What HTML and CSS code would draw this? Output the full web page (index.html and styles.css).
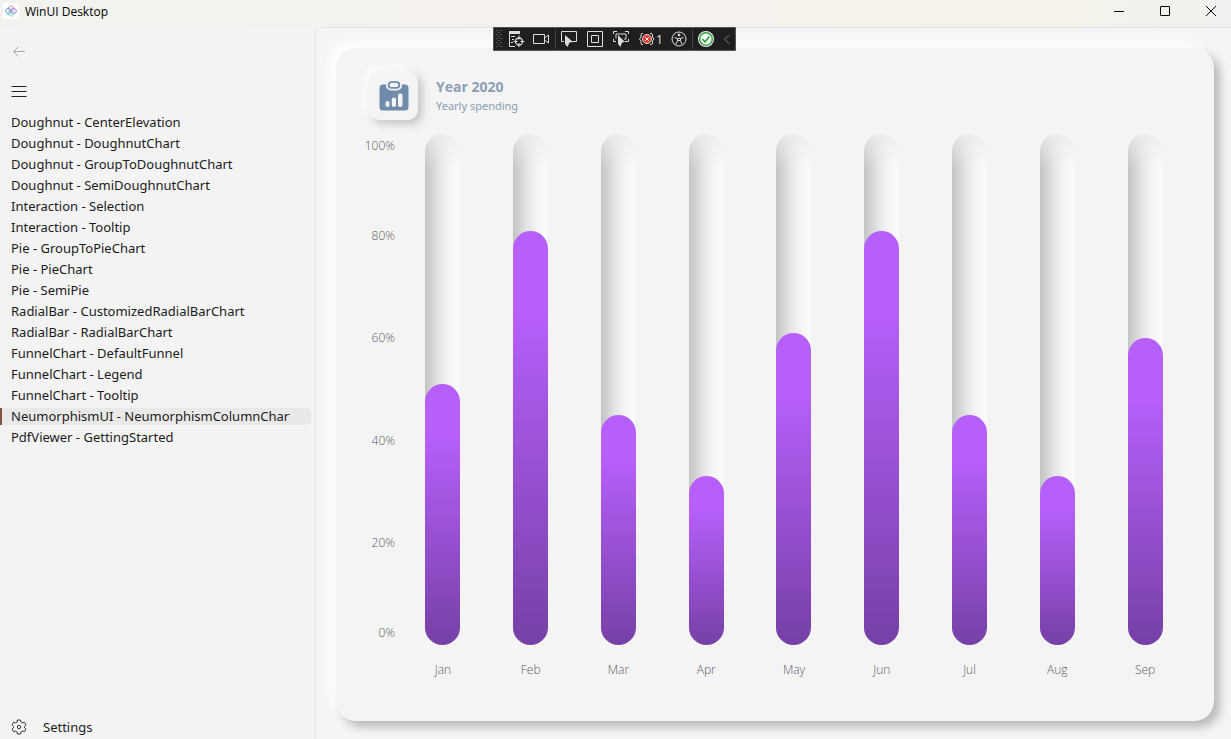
FILE: index.html
```
<!DOCTYPE html>
<html lang="en">
<head>
<meta charset="utf-8">
<title>WinUI Desktop</title>
<link rel="stylesheet" href="styles.css">
</head>
<body>
<div class="window">
  <header class="titlebar">
    <svg class="app-logo" width="16" height="16" viewBox="0 0 16 16" fill="none" stroke-width="1.100">
      <rect width="16" height="16" fill="#fff"/>
      <rect x="5.500" y="3.300" width="5" height="5" rx="1.600" transform="rotate(45 8 5.800)" stroke="#f39aa6"/>
      <rect x="8" y="5.500" width="5" height="5" rx="1.600" transform="rotate(45 10.500 8)" stroke="#a58cf2"/>
      <rect x="5.500" y="7.700" width="5" height="5" rx="1.600" transform="rotate(45 8 10.200)" stroke="#8be0cf"/>
      <rect x="3" y="5.500" width="5" height="5" rx="1.600" transform="rotate(45 5.500 8)" stroke="#6fb4f2"/>
      <path d="m6.800 6.800 2.400 2.400" stroke="#e070c8"/>
    </svg>
    <h1 class="app-title">WinUI Desktop</h1>
    <div class="caption-buttons">
      <button class="caption" aria-label="Minimize"><svg width="12" height="12" viewBox="0 0 12 12"><path d="M1 6.500h10" stroke="#000" fill="none"/></svg></button>
      <button class="caption" aria-label="Maximize"><svg width="12" height="12" viewBox="0 0 12 12"><rect x="1.500" y="1.500" width="9" height="9" rx=".5" stroke="#000" fill="none"/></svg></button>
      <button class="caption" aria-label="Close"><svg width="12" height="12" viewBox="0 0 12 12"><path d="m1 1 10 10M11 1 1 11" stroke="#000" fill="none"/></svg></button>
    </div>
  </header>

  <div class="body">
    <aside class="sidebar">
      <button class="icon-button back" aria-label="Back" disabled><svg width="16" height="16" viewBox="0 0 16 16" fill="none" stroke="#aaa"><path d="M14 8.500H2.500M7.500 3.500l-5 5 5 5"/></svg></button>
      <button class="icon-button menu" aria-label="Menu"><svg width="16" height="16" viewBox="0 0 16 16" fill="none" stroke="#222"><path d="M.5 3.500h15M.5 8.500h15M.5 13.500h15"/></svg></button>
      <nav class="nav">
        <a class="nav-item" href="#"><span>Doughnut - CenterElevation</span></a>
        <a class="nav-item" href="#"><span>Doughnut - DoughnutChart</span></a>
        <a class="nav-item" href="#"><span>Doughnut - GroupToDoughnutChart</span></a>
        <a class="nav-item" href="#"><span>Doughnut - SemiDoughnutChart</span></a>
        <a class="nav-item" href="#"><span>Interaction - Selection</span></a>
        <a class="nav-item" href="#"><span>Interaction - Tooltip</span></a>
        <a class="nav-item" href="#"><span>Pie - GroupToPieChart</span></a>
        <a class="nav-item" href="#"><span>Pie - PieChart</span></a>
        <a class="nav-item" href="#"><span>Pie - SemiPie</span></a>
        <a class="nav-item" href="#"><span>RadialBar - CustomizedRadialBarChart</span></a>
        <a class="nav-item" href="#"><span>RadialBar - RadialBarChart</span></a>
        <a class="nav-item" href="#"><span>FunnelChart - DefaultFunnel</span></a>
        <a class="nav-item" href="#"><span>FunnelChart - Legend</span></a>
        <a class="nav-item" href="#"><span>FunnelChart - Tooltip</span></a>
        <a class="nav-item selected" href="#" aria-current="page"><span>NeumorphismUI - NeumorphismColumnChart</span></a>
        <a class="nav-item" href="#"><span>PdfViewer - GettingStarted</span></a>
      </nav>
      <a class="settings" href="#">
        <svg width="16" height="16" viewBox="0 0 16 16" fill="none" stroke="#333" stroke-linejoin="round"><path d="M6.500 1h3l.5 2 1.500.9 2-.6 1.500 2.600L13.500 7.300v1.400L15 10.100l-1.500 2.600-2-.6-1.500.9-.5 2h-3l-.5-2-1.500-.9-2 .6L1 10.100l1.500-1.400V7.300L1 5.900l1.500-2.600 2 .6L6 3z"/><circle cx="8" cy="8" r="1.700"/></svg>
        <span>Settings</span>
      </a>
    </aside>

    <main class="content">
      <section class="card">
        <header class="card-header">
          <div class="badge">
            <svg width="30" height="30" viewBox="0 0 30 30">
              <path d="M4 3.500h22A3.500 3.500 0 0 1 29.500 7v19a3.500 3.500 0 0 1-3.500 3.500H4A3.500 3.500 0 0 1 .5 26V7A3.500 3.500 0 0 1 4 3.500z" fill="#6f8cab"/>
              <rect x="7" y="-1.500" width="16" height="11" rx="5" fill="#f4f4f4"/>
              <rect x="9.700" y="1.200" width="10.600" height="5.600" rx="2.500" fill="none" stroke="#6f8cab" stroke-width="1.800"/>
              <rect x="6.500" y="20" width="4" height="6" rx="2" fill="#f4f4f4"/>
              <rect x="12.800" y="16.500" width="4.200" height="9.500" rx="2" fill="#f4f4f4"/>
              <rect x="19" y="12.500" width="4.500" height="13.500" rx="2" fill="#f4f4f4"/>
            </svg>
          </div>
          <div>
            <h2 class="card-title">Year 2020</h2>
            <p class="card-subtitle">Yearly spending</p>
          </div>
        </header>
        <div class="chart">
          <div class="y-axis"><span>100%</span><span>80%</span><span>60%</span><span>40%</span><span>20%</span><span>0%</span></div>
          <div class="columns">
            <div class="track"><div class="bar" style="height:51%"></div></div>
            <div class="track"><div class="bar" style="height:81%"></div></div>
            <div class="track"><div class="bar" style="height:45%"></div></div>
            <div class="track"><div class="bar" style="height:33%"></div></div>
            <div class="track"><div class="bar" style="height:61%"></div></div>
            <div class="track"><div class="bar" style="height:81%"></div></div>
            <div class="track"><div class="bar" style="height:45%"></div></div>
            <div class="track"><div class="bar" style="height:33%"></div></div>
            <div class="track"><div class="bar" style="height:60%"></div></div>
          </div>
          <div class="x-axis"><span>Jan</span><span>Feb</span><span>Mar</span><span>Apr</span><span>May</span><span>Jun</span><span>Jul</span><span>Aug</span><span>Sep</span></div>
        </div>
      </section>
    </main>
  </div>

  <div class="debug-bar" role="toolbar" aria-label="Debug tools">
    <svg class="grip" width="8" height="20" viewBox="0 0 8 20" stroke="#555" stroke-dasharray="2 2"><path d="M1 1.500h6M1 5.500h6M1 9.500h6M1 13.500h6M1 17.500h6"/><path d="M3 3.500h4M3 7.500h4M3 11.500h4M3 15.500h4"/></svg>
    <button class="tool" aria-label="Live visual tree"><svg width="18" height="18" viewBox="0 0 18 18" fill="none" stroke="#ddd"><path d="M2 1h11v3H2z" fill="#ddd" stroke="none"/><path d="M2.500 2v14.500H8M4 6.500h4M5 9.500h2M4 12.500h2M12 5.500v4M12 13v4M6.500 11.500h4M13.500 11.500h4"/><circle cx="12" cy="11.500" r="3.500" stroke-width="1.300"/></svg></button>
    <button class="tool" aria-label="Record"><svg width="18" height="18" viewBox="0 0 18 18" fill="none" stroke="#ddd"><path d="M.5 4.500h11v9H.5zM11.500 8l4-3v8l-4-3"/></svg></button>
    <i class="divider"></i>
    <button class="tool" aria-label="Select element"><svg width="18" height="18" viewBox="0 0 18 18" fill="none" stroke="#ddd"><path d="M4 11.500H1.500v-10h15v10H12"/><path d="m5 5 8 7-3.500.5L7.500 17 5 14z" fill="#ddd" stroke="none"/></svg></button>
    <button class="tool" aria-label="Show layout adorners"><svg width="18" height="18" viewBox="0 0 18 18" fill="none" stroke="#ddd"><path d="M1.500 1.500h15v15h-15zM5.500 5.500h7v7h-7z"/></svg></button>
    <button class="tool" aria-label="Track focused element"><svg width="18" height="18" viewBox="0 0 18 18" fill="none" stroke="#ddd"><path d="M1.500 4V1.500H5M13 1.500h3.500V4M1.500 9v2.500H4M13 11.500h3.500V9M4 8.500v-4.500h10v5h-2"/><path d="m6 5 7 7-3 .5L8.500 17 6 14z" fill="#ddd" stroke="none"/></svg></button>
    <button class="tool failures" aria-label="Binding failures"><svg width="18" height="18" viewBox="0 0 18 18" fill="none" stroke="#ddd"><path d="M5 3.500H4Q3 3.500 3 5v2L1.500 9 3 11v2q0 1.500 1 1.500h1M12 3.500h1q1.500 0 1.500 1.500v2L16 9l-1.500 2v2q0 1.500-1.500 1.500h-1"/><circle cx="9" cy="9" r="4.500" fill="#e33b2e" stroke="#fff" stroke-width=".8"/><path d="m7.200 7.200 3.600 3.600m0-3.600-3.600 3.600" stroke="#fff"/></svg><span>1</span></button>
    <button class="tool" aria-label="Accessibility"><svg width="18" height="18" viewBox="0 0 18 18" fill="none" stroke="#ddd"><circle cx="9" cy="9" r="7"/><circle cx="9" cy="5" r="1" fill="#ddd"/><path d="m4.500 7.500 3 1h3l3-1M7.500 8.500v2L6 14.500M10.500 8.500v2l1.500 4M7.500 10.500h3"/></svg></button>
    <i class="divider"></i>
    <button class="tool" aria-label="Hot reload"><svg width="18" height="18" viewBox="0 0 18 18" fill="none"><circle cx="9" cy="9" r="8" fill="#f2f2f2"/><circle cx="9" cy="9" r="6.300" fill="#fff" stroke="#35a043" stroke-width="1.500"/><path d="m5.500 9 2.500 2.800 4.500-5.300" stroke="#35a043" stroke-width="1.800"/></svg></button>
    <button class="tool collapse" aria-label="Collapse"><svg width="8" height="18" viewBox="0 0 8 18" fill="none" stroke="#777"><path d="m6.500 5-5 4.500 5 4.500"/></svg></button>
  </div>
</div>
</body>
</html>
```
FILE: styles.css
```
* { box-sizing: border-box; }
body {
  margin: 0;
  font-family: "Noto Sans", "Open Sans", sans-serif;
  font-size: 13px;
  color: #1b1b1b;
}
h1, h2, p { margin: 0; }
a { color: inherit; text-decoration: none; }
button { border: 0; padding: 0; background: none; font: inherit; color: inherit; }
svg { display: block; flex: none; }

.window {
  position: relative;
  display: flex;
  flex-direction: column;
  height: 100vh;
  background: #f3f3f3;
}
.titlebar {
  flex: none;
  display: flex;
  height: 27px;
  padding-left: 3px;
  background: linear-gradient(90deg, #f2f3ee 0%, #f3f2ef 22%, #f6f1ed 50%, #f5f2ea 85%, #eff2ef 100%);
}
.app-logo { margin-top: 3px; }
.app-title {
  margin-left: 6px;
  font-family: "Open Sans", sans-serif;
  font-size: 12px;
  font-weight: 400;
  line-height: 24px;
  color: #000;
}
.caption-buttons { display: flex; gap: 6px; height: 22px; margin-left: auto; }
.caption { display: grid; place-items: center; width: 40px; }

.body { flex: 1; display: flex; min-height: 0; }
.sidebar {
  flex: none;
  display: flex;
  flex-direction: column;
  width: 315px;
}
.icon-button { display: grid; place-items: center start; height: 40px; padding-left: 11px; }
.back { margin-top: 4px; }
.nav { display: flex; flex-direction: column; gap: 4px; margin-top: 3px; }
.nav-item {
  height: 17px;
  margin-right: 4px;
  padding: 0 21px 0 11px;
  border-radius: 0 4px 4px 0;
  line-height: 16px;
  white-space: nowrap;
}
.nav-item span { display: block; overflow: hidden; height: 20px; }
.selected { background: #e9e9e9; box-shadow: inset 2px 0 #84503f; }
.settings {
  display: flex;
  align-items: center;
  gap: 16px;
  height: 24px;
  margin-top: auto;
  padding-left: 11px;
}

.content {
  flex: 1;
  display: flex;
  min-width: 0;
  padding: 20px 17px 18px 20px;
  border: 1px solid #e5e5e5;
  border-width: 1px 0 0 1px;
  border-radius: 8px 0 0 0;
  background: #f5f5f5;
  overflow: hidden;
}
.card {
  flex: 1;
  display: flex;
  flex-direction: column;
  padding: 23px 25px 26px 28px;
  border-radius: 20px;
  background: #f4f4f4;
  box-shadow: 6px 6px 10px #b9b9b9, -6px -6px 10px #fff;
}
.card-header { display: flex; gap: 18px; padding-left: 5px; }
.badge {
  display: grid;
  place-items: center;
  width: 49px;
  height: 49px;
  border-radius: 10px;
  background: #f4f4f4;
  box-shadow: 4px 4px 8px #c4c4c4, -4px -4px 8px #fff;
}
.card-title { margin-top: 6px; font-family: "Open Sans", sans-serif; font-size: 14px; line-height: 20px; color: #8a9fb5; }
.card-subtitle { font-size: 11px; line-height: 18px; color: #8a9fb5; }

.chart {
  flex: 1;
  display: grid;
  grid-template: 1fr 50px / 35px 1fr;
  margin-top: 14px;
  font-family: "Open Sans", sans-serif;
  font-size: 12px;
  font-weight: 300;
  color: #5c5c5c;
}
.y-axis {
  display: flex;
  flex-direction: column;
  text-align: right;
  line-height: 24px;
  margin-right: 4px;
}
.y-axis span { flex: 2 0 0; display: flex; align-items: center; justify-content: flex-end; }
.y-axis span:first-child { flex-grow: 1; align-items: flex-start; }
.y-axis span:last-child { flex-grow: 1; align-items: flex-end; }
.columns, .x-axis {
  display: grid;
  grid-template-columns: repeat(9, 1fr);
  justify-items: center;
}
.x-axis { grid-column: 2; align-items: center; line-height: 16px; }
.track {
  display: flex;
  align-items: flex-end;
  width: 35px;
  border-radius: 18px;
  background:
    linear-gradient(rgba(236, 236, 236, .8), rgba(240, 240, 240, 0) 36px),
    linear-gradient(90deg, #c4c4c4 0%, #cfcfcf 15%, #e6e6e6 42%, #f6f6f6 72%, #fbfbfb 100%);
}
.bar {
  width: 100%;
  border-radius: 18px;
  background: linear-gradient(#b65ffa 0%, #b65ffa 20%, #7640a6 100%);
}

.debug-bar {
  position: absolute;
  top: 27px;
  left: 493px;
  display: flex;
  align-items: center;
  height: 24px;
  padding-left: 1px;
  border: 1px solid #555;
  background: #1f1f1f;
  color: #ddd;
}
.tool { display: grid; place-items: center; width: 26px; height: 22px; }
.failures { display: flex; align-items: center; width: 32px; padding-left: 4px; font-size: 12px; }
.collapse { width: 16px; }
.divider { width: 1px; height: 20px; background: #444; }
```
